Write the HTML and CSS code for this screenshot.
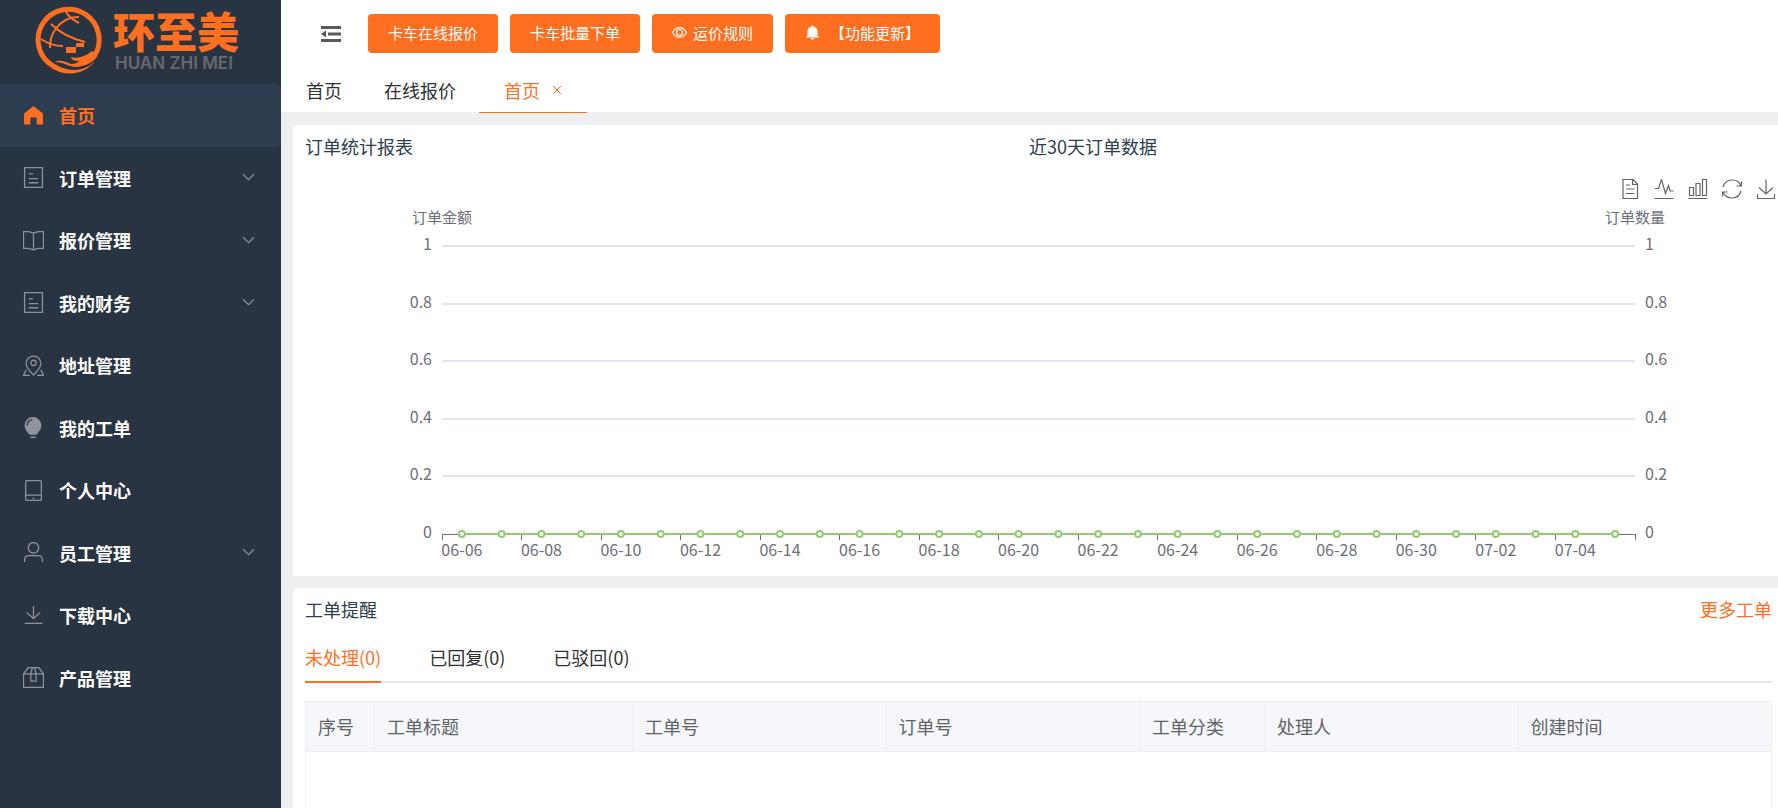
FILE: index.html
```html
<!DOCTYPE html>
<html lang="zh-CN">
<head>
  <meta charset="UTF-8" />
  <meta name="viewport" content="width=device-width, initial-scale=1.0"/>
  <title>首页</title>
  <link rel="stylesheet" href="styles.css">
</head>
<body>

  <aside class="sidebar">
    <div class="logo">
      <svg class="logo-mark" viewBox="0 0 68 70" aria-hidden="true">
        <path class="logo-ring" d="M60 50A30.500 30.500 0 1 0 14.500 58.500"/>
        <path d="M12.500 60A33 33 0 0 0 62 54C52 66 34 70 16 56.500z"/>
        <path d="M20 57c5-3 11 0 16 2 4 0 7-1 8-3-4 0-8-1-8-4 6 2 14 0 21-6l5.500 5C58 58 50 61 42 62c-8 0-14-5-22-5z"/>
        <path class="logo-line" d="M16 19c8 8 18 14 34 18M31 7c3 5 7 8 13 11M44 12c-10 0-18 4-24 13-4 5-5 12-5 18M6 34c7 5 14 7 22 7"/>
        <path d="M41 38h8v4h-8zM31 42h10v6H31z"/>
      </svg>
      <div class="logo-text">
        <strong>环至美</strong>
        <span>HUAN ZHI MEI</span>
      </div>
    </div>

    <nav class="menu">
      <a class="menu-item active" href="#">
        <svg class="icon solid" viewBox="0 0 20 20"><path d="M10 1l9 7v10.500h-6V12H7v6.500H1V8z"/></svg>
        <span>首页</span>
      </a>
      <a class="menu-item" href="#">
        <svg class="icon" viewBox="0 0 20 20"><path d="M1.500.500h17v19h-17zM5.500 6.500h4M5.500 11h9M5.500 15h9"/></svg>
        <span>订单管理</span>
        <svg class="arrow" viewBox="0 0 12 12"><path d="M1 3l5 5 5-5"/></svg>
      </a>
      <a class="menu-item" href="#">
        <svg class="icon" viewBox="0 0 20 20"><path d="M.500 1.500h5L10 3l4.500-1.500h5v16h-5L10 19l-4.500-1.500h-5zM10 3v16"/></svg>
        <span>报价管理</span>
        <svg class="arrow" viewBox="0 0 12 12"><path d="M1 3l5 5 5-5"/></svg>
      </a>
      <a class="menu-item" href="#">
        <svg class="icon" viewBox="0 0 20 20"><path d="M1.500.500h17v19h-17zM5.500 6.500h4M5.500 11h9M5.500 15h9"/></svg>
        <span>我的财务</span>
        <svg class="arrow" viewBox="0 0 12 12"><path d="M1 3l5 5 5-5"/></svg>
      </a>
      <a class="menu-item" href="#">
        <svg class="icon" viewBox="0 0 20 20"><path d="M10 19c-4-4-7-7.500-7-11a7 7 0 0 1 14 0c0 3.500-3 7-7 11zM3 14l-2.500 5.500h6M17 14l2.500 5.500h-6"/><circle cx="10" cy="7.500" r="2.500"/></svg>
        <span>地址管理</span>
      </a>
      <a class="menu-item" href="#">
        <svg class="icon solid" viewBox="0 0 20 20"><path d="M9.500 0a8 8 0 0 1 8 8c0 4-3 6-4.500 9H6C4.500 14 1.500 12 1.500 8a8 8 0 0 1 8-8zM7 18.500h5v1.500H7z"/><path class="shine" d="M4 8c0-3 2-5 5-5.500"/></svg>
        <span>我的工单</span>
      </a>
      <a class="menu-item" href="#">
        <svg class="icon" viewBox="0 0 20 20"><rect x="2.500" y=".500" width="15" height="19" rx="1.500"/><path d="M2.500 14.500h15M9 17.500h2"/></svg>
        <span>个人中心</span>
      </a>
      <a class="menu-item" href="#">
        <svg class="icon" viewBox="0 0 20 20"><circle cx="10" cy="5.500" r="5"/><path d="M1.500 19v-2.500a4 4 0 0 1 4-3.500h9a4 4 0 0 1 4 3.500V19"/></svg>
        <span>员工管理</span>
        <svg class="arrow" viewBox="0 0 12 12"><path d="M1 3l5 5 5-5"/></svg>
      </a>
      <a class="menu-item" href="#">
        <svg class="icon" viewBox="0 0 20 20"><path d="M10 1v12M3.500 7l6.500 6 6.500-6M1.500 17.500h17"/></svg>
        <span>下载中心</span>
      </a>
      <a class="menu-item" href="#">
        <svg class="icon" viewBox="0 0 20 20"><path d="M.500 6.500h19v13H.500zM.500 6.500l4.500-6h10l4.500 6M7.500 6.500v7h5v-7M7.500 6.500l1.500-6M12.500 6.500l-1.500-6"/></svg>
        <span>产品管理</span>
      </a>
    </nav>
  </aside>

  <main class="main">
    <header class="header">
      <div class="toolbar">
        <button class="fold" type="button" aria-label="收起菜单">
          <svg viewBox="0 0 20 16"><path d="M0 0h20v3H0zM7 6.500h13v3H7zM0 13h20v3H0zM5 4.500v7L0 8z"/></svg>
        </button>
        <button class="btn" type="button">卡车在线报价</button>
        <button class="btn" type="button">卡车批量下单</button>
        <button class="btn" type="button">
          <svg class="eye" viewBox="0 0 15 15"><path d="M.500 7.500C4 1 11 1 14.500 7.500 11 14 4 14 .500 7.500z"/><circle cx="7.500" cy="7.500" r="3"/></svg>
          运价规则
        </button>
        <button class="btn notice" type="button">
          <svg viewBox="0 0 15 15"><path d="M6.500 1.500a1 1 0 0 1 2 0c2.500.500 4 2.500 4 5V11l1.500 1v.500H1V12l1.500-1V6.500c0-2.500 1.500-4.500 4-5zM5.500 13h4a2 1.500 0 0 1-4 0z"/></svg>
          【功能更新】
        </button>
      </div>
      <nav class="tabs">
        <a class="tab" href="#">首页</a>
        <a class="tab" href="#">在线报价</a>
        <a class="tab active" href="#">首页
          <svg viewBox="0 0 10 10"><path d="M1 1l8 8M9 1l-8 8"/></svg>
        </a>
      </nav>
    </header>

    <section class="card">
      <div class="report-head">
        <h2>订单统计报表</h2>
        <h2>近30天订单数据</h2>
      </div>
      <div class="toolbox">
        <svg viewBox="0 0 20 20"><path d="M3 .500h10l4.500 4.500v14.500H3zM12.500.500V5.500h5M6 6h4M6 10h8.500M6 14.500h8.500"/></svg>
        <svg viewBox="0 0 20 20"><path d="M.500 9.500h4l3-9 4 14 3-8 1.500 5.500h3.500M.500 19.500h19"/></svg>
        <svg viewBox="0 0 20 20"><path d="M1.500 8.500h4v8h-4zM8 4.500h4v12H8zM14.500.500h4v16h-4zM.500 19.500h19"/></svg>
        <svg viewBox="0 0 20 20"><path d="M1 8a9.500 9.500 0 0 1 18-1M19 12a9.500 9.500 0 0 1-18 1M19.500 2.500V7h-5M.500 17.500V13h5"/></svg>
        <svg viewBox="0 0 20 20"><path d="M10 .500V15M3 8.500l7 6.500 7-6.500M1.500 15v4.500h17V15"/></svg>
      </div>
      <svg class="chart" id="chart" role="img" aria-label="近30天订单数据"></svg>
    </section>

    <section class="card">
      <div class="order-head">
        <h2>工单提醒</h2>
        <a href="#">更多工单</a>
      </div>
      <nav class="order-tabs">
        <a class="order-tab active" href="#">未处理(0)</a>
        <a class="order-tab" href="#">已回复(0)</a>
        <a class="order-tab" href="#">已驳回(0)</a>
      </nav>
      <table class="order-table">
        <colgroup>
          <col class="col-index"><col class="col-title"><col><col><col class="col-type"><col><col>
        </colgroup>
        <thead>
          <tr>
            <th>序号</th>
            <th>工单标题</th>
            <th>工单号</th>
            <th>订单号</th>
            <th>工单分类</th>
            <th>处理人</th>
            <th>创建时间</th>
          </tr>
        </thead>
        <tbody>
          <tr><td class="empty" colspan="7"></td></tr>
        </tbody>
      </table>
    </section>
  </main>

  <script src="chart.js"></script>
</body>
</html>
```
FILE: styles.css
```css
* {
  box-sizing: border-box;
}
body {
  display: flex;
  min-height: 100vh;
  margin: 0;
  font-family: "Noto Sans CJK SC", sans-serif;
  font-size: 18px;
  line-height: 24px;
  color: #303133;
  background: #eeeff1;
}
a {
  color: inherit;
  text-decoration: none;
}
h2 {
  margin: 0;
  font-size: 18px;
  font-weight: 400;
  color: #2d3e50;
}
button {
  font-family: inherit;
  border: 0;
  cursor: pointer;
}

/* sidebar */
.sidebar {
  flex: 0 0 281px;
  background: #293442;
}
.logo {
  display: flex;
  gap: 10px;
  height: 84px;
  padding: 5px 0 0 35px;
}
.logo-mark {
  width: 68px;
  height: 70px;
  fill: #ff6f1f;
}
.logo-ring {
  fill: none;
  stroke: #ff6f1f;
  stroke-width: 5;
}
.logo-line {
  fill: none;
  stroke: #ff6f1f;
  stroke-width: 2;
}
.logo-text {
  display: flex;
  flex-direction: column;
}
.logo-text strong {
  font-size: 42px;
  font-weight: 900;
  line-height: 50px;
  color: #ff6f1f;
}
.logo-text span {
  padding-left: 2px;
  font-family: Inter, sans-serif;
  font-size: 17px;
  font-weight: 600;
  line-height: 16px;
  color: #66696d;
}
.menu {
  display: flex;
  flex-direction: column;
  min-height: 625px;
}
.menu-item {
  display: flex;
  flex: 1;
  align-items: center;
  gap: 15px;
  padding: 0 26px 0 23px;
  font-weight: 700;
  color: #fff;
}
.menu-item.active {
  color: #ff6f1f;
  background: #2d3d4f;
  border-radius: 0 5px 5px 0;
}
.icon {
  width: 21px;
  height: 21px;
  fill: none;
  stroke: #909399;
  stroke-width: 1.2;
}
.icon.solid {
  fill: #909399;
  stroke: none;
}
.active .icon.solid {
  fill: #ff6f1f;
}
.shine {
  fill: none;
  stroke: #293442;
}
.arrow {
  width: 13px;
  height: 13px;
  margin-left: auto;
  fill: none;
  stroke: #909399;
}

/* header */
.main {
  flex: 1;
  min-width: 0;
}
.header {
  height: 112px;
  margin-bottom: 13px;
  background: #fff;
}
.toolbar {
  display: flex;
  align-items: center;
  gap: 12px;
  padding: 14px 0 0 40px;
}
.fold {
  width: 20px;
  height: 16px;
  margin-right: 15px;
  padding: 0;
  background: none;
}
.fold svg {
  display: block;
  fill: #5a5a5a;
}
.btn {
  display: flex;
  align-items: center;
  gap: 6px;
  height: 39px;
  padding: 0 20px 2px;
  font-size: 15px;
  color: #fff;
  background: #ff6f1f;
  border-radius: 4px;
}
.btn.notice {
  gap: 10px;
}
.btn svg {
  width: 15px;
  height: 15px;
  fill: #fff;
}
.btn .eye {
  fill: none;
  stroke: #fff;
  stroke-width: 1.2;
}
.tabs {
  display: flex;
  padding: 16px 0 0 4px;
}
.tab {
  display: flex;
  align-items: center;
  gap: 12px;
  height: 44px;
  padding: 0 21px 2px;
}
.tab.active {
  margin-left: 2px;
  padding: 0 25px 1px;
  color: #ff6f1f;
  border-bottom: 1px solid #ff6f1f;
}
.tab svg {
  width: 10px;
  height: 10px;
  stroke: #ff6f1f;
}

/* cards */
.card {
  margin: 0 0 12px 12px;
  padding: 9px 6px 0 12px;
  background: #fff;
  border-radius: 5px 0 0 0;
}
.report-head {
  display: grid;
  grid-template-columns: 724px 1fr;
}
.toolbox {
  display: flex;
  justify-content: flex-end;
  gap: 14px;
  height: 41px;
  margin-right: -4px;
  padding-top: 21px;
}
.toolbox svg {
  width: 20px;
  height: 20px;
  fill: none;
  stroke: #666;
  stroke-width: 1.2;
}
.chart {
  display: block;
  width: 100%;
  height: 377px;
  font-size: 16px;
  fill: #6e7079;
}
.chart .name {
  font-size: 15px;
}
.split {
  stroke: #e0e6f1;
  stroke-width: 2;
}
.axis {
  stroke: #6e7079;
}
.series {
  stroke: #91cc75;
  stroke-width: 2;
}
.point {
  fill: #fff;
  stroke: #91cc75;
  stroke-width: 2;
}

/* work orders */
.card:last-child {
  margin-bottom: 0;
}
.order-head {
  display: flex;
  justify-content: space-between;
}
.order-head a {
  color: #ff6f1f;
}
.order-tabs {
  display: flex;
  gap: 48px;
  margin-top: 15px;
  border-bottom: 2px solid #e4e7ed;
}
.order-tab {
  height: 47px;
  margin-bottom: -2px;
  padding-top: 9px;
}
.order-tab.active {
  color: #ff6f1f;
  border-bottom: 2px solid #ff6f1f;
}
.order-table {
  width: 100%;
  margin-top: 18px;
  table-layout: fixed;
  border-collapse: collapse;
}
.order-table th,
.order-table td {
  padding: 11px 12px 13px;
  border: 1px solid #ebeef5;
}
.order-table th {
  height: 50px;
  font-weight: 400;
  text-align: left;
  color: #606266;
  background: #f5f7fa;
}
.order-table .empty {
  height: 57px;
  border-bottom: 0;
}
.col-index {
  width: 69px;
}
.col-title {
  width: 258px;
}
.col-type {
  width: 125px;
}
```
FILE: chart.js
```js
const chart = document.getElementById('chart');
const values = new Array(30).fill(0);
const startDate = new Date(2024, 5, 6);

const side = 137;
const top0 = 47;
const bottom = 335;

function add(tag, attrs, text) {
  const el = document.createElementNS('http://www.w3.org/2000/svg', tag);
  for (const key in attrs) el.setAttribute(key, attrs[key]);
  if (text !== undefined) el.textContent = text;
  chart.appendChild(el);
}

function dayLabel(i) {
  const d = new Date(startDate);
  d.setDate(d.getDate() + i);
  return String(d.getMonth() + 1).padStart(2, '0') + '-' + String(d.getDate()).padStart(2, '0');
}

function drawChart() {
  chart.innerHTML = '';
  const right = chart.clientWidth - side;
  const step = (right - side) / values.length;
  const px = i => side + step * (i + 0.5);
  const py = v => bottom - v * (bottom - top0);

  add('text', { x: side, y: 24, 'text-anchor': 'middle', class: 'name' }, '订单金额');
  add('text', { x: right, y: 24, 'text-anchor': 'middle', class: 'name' }, '订单数量');

  // both value axes share the same split lines
  [0, 0.2, 0.4, 0.6, 0.8, 1].forEach(v => {
    const y = Math.round(py(v));
    if (v > 0) add('line', { x1: side, x2: right, y1: y, y2: y, class: 'split' });
    add('text', { x: side - 10, y: y + 4, 'text-anchor': 'end' }, v);
    add('text', { x: right + 10, y: y + 4 }, v);
  });

  add('line', { x1: side, x2: right, y1: bottom + 0.5, y2: bottom + 0.5, class: 'axis' });
  for (let i = 0; i <= values.length; i += 2) {
    const x = Math.floor(side + step * i) + 0.5;
    add('line', { x1: x, x2: x, y1: bottom, y2: bottom + 6, class: 'axis' });
    if (i < values.length) {
      add('text', { x: px(i), y: bottom + 22, 'text-anchor': 'middle' }, dayLabel(i));
    }
  }

  add('line', { x1: px(0), x2: px(values.length - 1), y1: bottom, y2: bottom, class: 'series' });
  values.forEach((v, i) => add('circle', { cx: px(i), cy: py(v), r: 3, class: 'point' }));
}

drawChart();
window.addEventListener('resize', drawChart);
```
